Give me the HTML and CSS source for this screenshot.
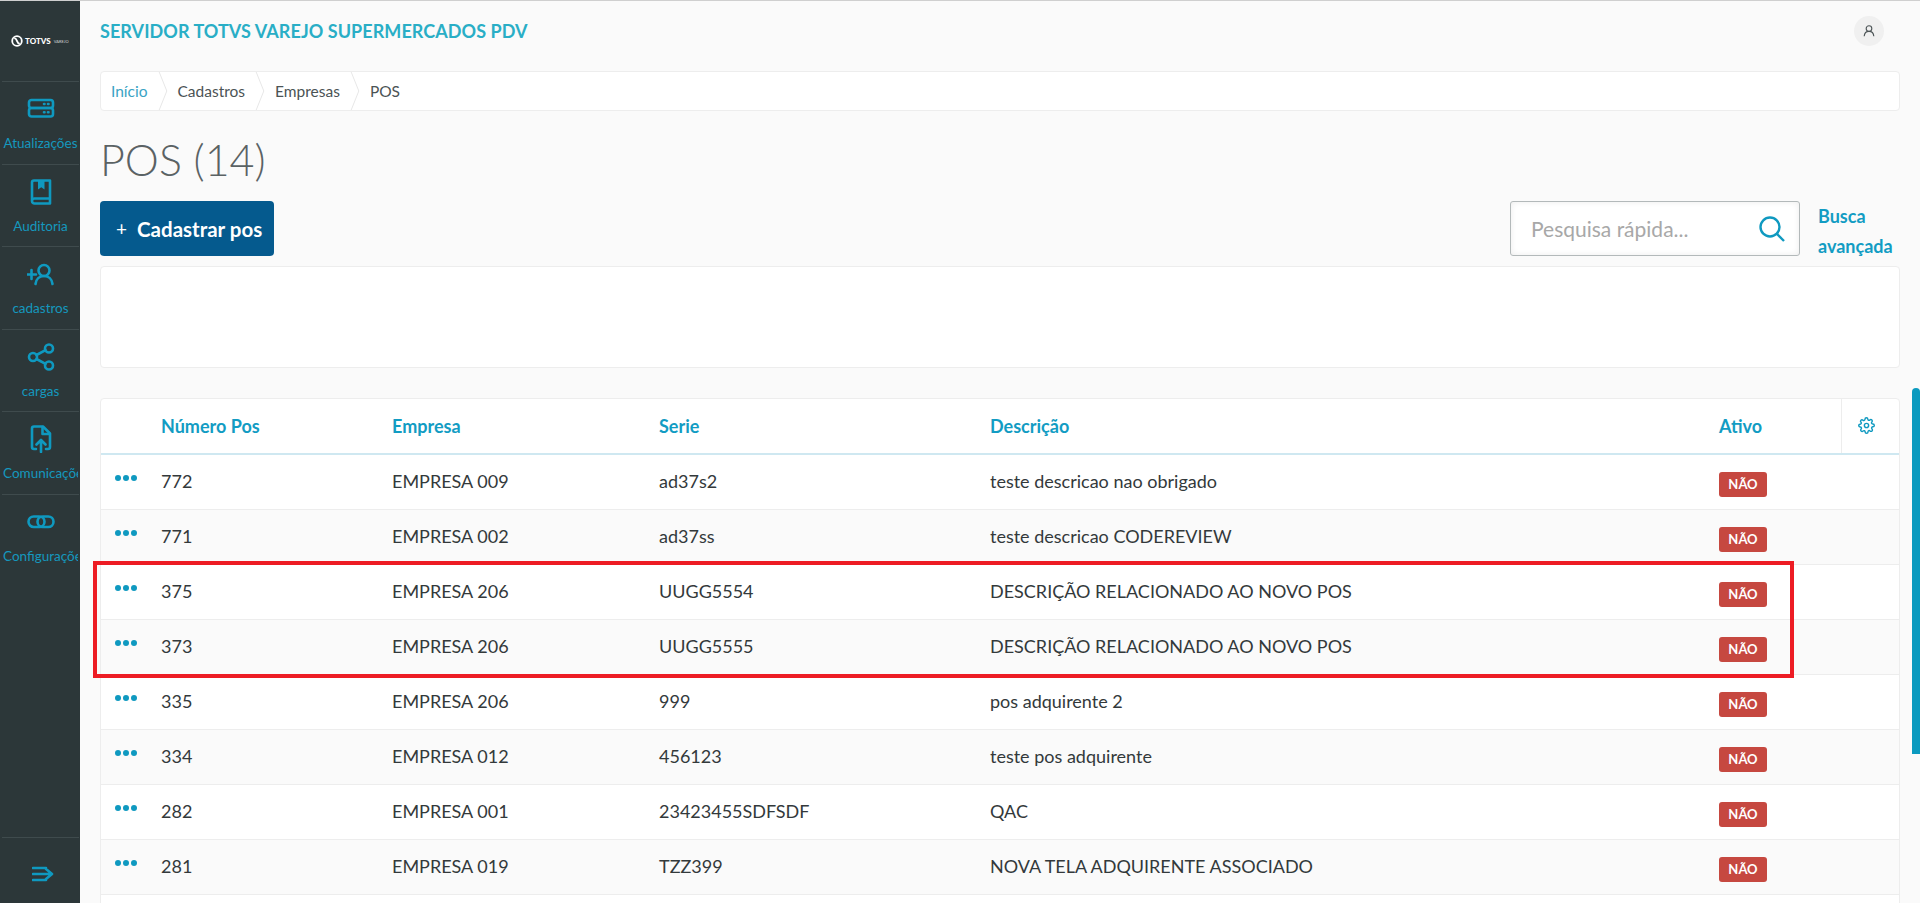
FILE: index.html
```html
<!DOCTYPE html>
<html lang="pt-BR">
<head>
    <meta charset="UTF-8">
    <meta name="viewport" content="width=device-width, initial-scale=1.0">
    <title>POS</title>
    <link rel="stylesheet" href="styles.css">
</head>
<body>
    <aside class="sidebar">
        <div class="logo">
            <svg class="logo-mark" viewBox="0 0 12 12"><circle cx="6" cy="6" r="4.8"/><path d="M3.200 3.200c2 .2 2.300 1.300 2.800 2.800s.8 2.600 2.800 2.800"/></svg>
            <span class="logo-name">TOTVS</span>
            <span class="logo-sub">VAREJO</span>
        </div>
        <nav class="menu">
            <a class="menu-item">
                <svg class="menu-icon" viewBox="0 0 28 28"><rect x="2" y="5" width="24" height="8" rx="2.5"/><rect x="2" y="13" width="24" height="8.5" rx="2.5"/><path d="M17 9h.5M21 9h.5M17 17.3h.5M21 17.3h.5"/></svg>
                <span class="menu-label">Atualizações</span>
            </a>
            <a class="menu-item">
                <svg class="menu-icon" viewBox="0 0 28 28"><path d="M5 23V4.5A2 2 0 0 1 7 2.500H23V25.500H7.500A2.500 2.500 0 0 1 5 23A2.500 2.500 0 0 1 7.500 20.500H23"/><path class="solid" d="M11 3h6.500v8.500l-3.250-2.300L11 11.500z"/></svg>
                <span class="menu-label">Auditoria</span>
            </a>
            <a class="menu-item">
                <svg class="menu-icon" viewBox="0 0 28 28"><path d="M0 14.500h9M4.500 10v9"/><circle cx="17" cy="10.500" r="5.500"/><path d="M8.500 24c.5-5 4-8 8.500-8s8 3 8.500 8"/></svg>
                <span class="menu-label">cadastros</span>
            </a>
            <a class="menu-item">
                <svg class="menu-icon" viewBox="0 0 28 28"><circle cx="6" cy="14" r="4"/><circle cx="22" cy="5.500" r="4"/><circle cx="22" cy="22.500" r="4"/><path d="M9.500 12l9-4.800M9.500 16l9 4.800"/></svg>
                <span class="menu-label">cargas</span>
            </a>
            <a class="menu-item">
                <svg class="menu-icon" viewBox="0 0 28 28"><path d="M9 24H7a2 2 0 0 1-2-2V3.500a2 2 0 0 1 2-2h9l7 7V22a2 2 0 0 1-2 2h-2"/><path d="M15.500 2v7h7" /><path d="M14 27V15M9.500 19.500L14 15l4.500 4.500"/></svg>
                <span class="menu-label">Comunicações</span>
            </a>
            <a class="menu-item">
                <svg class="menu-icon" viewBox="0 0 28 28"><rect x="1.500" y="8.500" width="16" height="10.500" rx="5.250"/><rect x="10.500" y="8.500" width="16" height="10.500" rx="5.250"/></svg>
                <span class="menu-label">Configurações</span>
            </a>
        </nav>
        <div class="sidebar-foot">
            <svg class="foot-icon" viewBox="0 0 22 16"><path d="M1 2h13M1 8h18M1 14h13M14 3l6 5-6 5"/></svg>
        </div>
    </aside>

    <main class="content">
        <header class="topbar">
            <h2 class="app-title">SERVIDOR TOTVS VAREJO SUPERMERCADOS PDV</h2>
            <span class="avatar">
                <svg viewBox="0 0 16 16"><circle cx="8" cy="5.200" r="3.200"/><path d="M2.500 14c.3-3.500 2.500-5.500 5.500-5.500s5.200 2 5.500 5.500"/></svg>
            </span>
        </header>

        <nav class="breadcrumb">
            <a class="crumb crumb-link">Início</a>
            <svg class="crumb-sep" viewBox="0 0 10 40"><path d="M1 0l8 20-8 20"/></svg>
            <a class="crumb">Cadastros</a>
            <svg class="crumb-sep" viewBox="0 0 10 40"><path d="M1 0l8 20-8 20"/></svg>
            <a class="crumb">Empresas</a>
            <svg class="crumb-sep" viewBox="0 0 10 40"><path d="M1 0l8 20-8 20"/></svg>
            <a class="crumb">POS</a>
        </nav>

        <h1 class="page-title">POS (14)</h1>

        <div class="toolbar">
            <button class="btn-new"><span class="btn-plus">+</span>Cadastrar pos</button>
            <div class="search">
                <span class="search-text">Pesquisa rápida...</span>
                <svg class="search-icon" viewBox="0 0 26 26"><circle cx="11" cy="11" r="9.500"/><path d="M18 18l7 7"/></svg>
            </div>
            <a class="search-more">Busca avançada</a>
        </div>

        <div class="filters"></div>

        <div class="table-card">
            <table class="grid">
                <colgroup>
                    <col class="col-acts"><col class="col-num"><col class="col-emp"><col class="col-serie"><col class="col-desc"><col class="col-ativo"><col class="col-cfg">
                </colgroup>
                <thead>
                    <tr>
                        <th></th>
                        <th>Número Pos</th>
                        <th>Empresa</th>
                        <th>Serie</th>
                        <th>Descrição</th>
                        <th>Ativo</th>
                        <th class="cfg">
                            <svg class="gear" viewBox="0 0 24 24"><circle cx="12" cy="12" r="3"/><path d="M19.400 15a1.650 1.650 0 0 0 .33 1.820l.06.06a2 2 0 1 1-2.830 2.830l-.06-.06a1.650 1.650 0 0 0-2.800 1.170V21a2 2 0 0 1-4 0v-.09a1.650 1.650 0 0 0-2.810-1.150l-.06.06a2 2 0 1 1-2.830-2.830l.06-.06a1.650 1.650 0 0 0-1.170-2.800H3a2 2 0 0 1 0-4h.09a1.650 1.650 0 0 0 1.150-2.810l-.06-.06a2 2 0 1 1 2.830-2.830l.06.06a1.650 1.650 0 0 0 2.800-1.170V3a2 2 0 0 1 4 0v.09a1.650 1.650 0 0 0 2.810 1.150l.06-.06a2 2 0 1 1 2.830 2.830l-.06.06a1.650 1.650 0 0 0 1.170 2.800H21a2 2 0 0 1 0 4h-.09a1.650 1.650 0 0 0-1.510 1z"/></svg>
                        </th>
                    </tr>
                </thead>
                <tbody>
                    <tr>
                        <td><span class="dots"><i></i><i></i><i></i></span></td>
                        <td>772</td><td>EMPRESA 009</td><td>ad37s2</td><td>teste descricao nao obrigado</td>
                        <td><span class="badge">NÃO</span></td><td></td>
                    </tr>
                    <tr>
                        <td><span class="dots"><i></i><i></i><i></i></span></td>
                        <td>771</td><td>EMPRESA 002</td><td>ad37ss</td><td>teste descricao CODEREVIEW</td>
                        <td><span class="badge">NÃO</span></td><td></td>
                    </tr>
                    <tr>
                        <td><span class="dots"><i></i><i></i><i></i></span></td>
                        <td>375</td><td>EMPRESA 206</td><td>UUGG5554</td><td>DESCRIÇÃO RELACIONADO AO NOVO POS</td>
                        <td><span class="badge">NÃO</span></td><td></td>
                    </tr>
                    <tr>
                        <td><span class="dots"><i></i><i></i><i></i></span></td>
                        <td>373</td><td>EMPRESA 206</td><td>UUGG5555</td><td>DESCRIÇÃO RELACIONADO AO NOVO POS</td>
                        <td><span class="badge">NÃO</span></td><td></td>
                    </tr>
                    <tr>
                        <td><span class="dots"><i></i><i></i><i></i></span></td>
                        <td>335</td><td>EMPRESA 206</td><td>999</td><td>pos adquirente 2</td>
                        <td><span class="badge">NÃO</span></td><td></td>
                    </tr>
                    <tr>
                        <td><span class="dots"><i></i><i></i><i></i></span></td>
                        <td>334</td><td>EMPRESA 012</td><td>456123</td><td>teste pos adquirente</td>
                        <td><span class="badge">NÃO</span></td><td></td>
                    </tr>
                    <tr>
                        <td><span class="dots"><i></i><i></i><i></i></span></td>
                        <td>282</td><td>EMPRESA 001</td><td>23423455SDFSDF</td><td>QAC</td>
                        <td><span class="badge">NÃO</span></td><td></td>
                    </tr>
                    <tr>
                        <td><span class="dots"><i></i><i></i><i></i></span></td>
                        <td>281</td><td>EMPRESA 019</td><td>TZZ399</td><td>NOVA TELA ADQUIRENTE ASSOCIADO</td>
                        <td><span class="badge">NÃO</span></td><td></td>
                    </tr>
                    <tr>
                        <td></td><td></td><td></td><td></td><td></td><td></td><td></td>
                    </tr>
                </tbody>
            </table>
        </div>
    </main>

    <div class="scroll-thumb"></div>
    <div class="highlight"></div>
</body>
</html>
```

FILE: styles.css
```css
* {
    margin: 0;
    padding: 0;
    box-sizing: border-box;
}

html, body {
    height: 903px;
    overflow: hidden;
}

body {
    display: flex;
    border-top: 1px solid #cfcfcf;
    background: #fafafa;
    font-family: Lato, "Open Sans", sans-serif;
    font-size: 18px;
    color: #33393b;
}

/* Sidebar */

.sidebar {
    width: 80px;
    flex-shrink: 0;
    display: flex;
    flex-direction: column;
    background: #2c3739;
}

.logo {
    height: 80px;
    display: flex;
    align-items: center;
    padding: 0 0 0 11px;
    color: #fff;
}

.logo-mark {
    width: 12px;
    height: 12px;
    fill: none;
    stroke: #fff;
    stroke-width: 1.800;
}

.logo-name {
    margin-left: 2px;
    font-size: 8px;
    font-weight: 900;
}

.logo-sub {
    margin-left: 3px;
    font-size: 4px;
    color: #cfd4d5;
}

.menu {
    flex: 1;
}

.menu-item {
    height: 82.600px;
    margin: 0 1px 0 2px;
    display: flex;
    flex-direction: column;
    align-items: center;
    padding: 13px 1px 0;
    border-top: 1px solid #3f4b4d;
    color: #1597be;
}

.menu-icon {
    width: 28px;
    height: 28px;
    flex-shrink: 0;
    fill: none;
    stroke: #0f99c0;
    stroke-width: 2.600;
    stroke-linecap: round;
    stroke-linejoin: round;
}

.menu-icon .solid {
    fill: #0f99c0;
    stroke: none;
}

.menu-label {
    width: 100%;
    margin-top: 10px;
    font-size: 13.500px;
    line-height: 20px;
    text-align: center;
    white-space: nowrap;
    overflow: hidden;
}

.sidebar-foot {
    height: 66px;
    margin: 0 1px 0 2px;
    padding: 7px 0 0 4px;
    display: flex;
    justify-content: center;
    align-items: center;
    border-top: 1px solid #3f4b4d;
}

.foot-icon {
    width: 22px;
    height: 16px;
    fill: none;
    stroke: #0f99c0;
    stroke-width: 2.600;
    stroke-linecap: round;
    stroke-linejoin: round;
}

/* Content */

.content {
    flex: 1;
    min-width: 0;
    padding: 0 20px 0 20px;
}

.topbar {
    height: 70px;
    display: flex;
    justify-content: space-between;
    align-items: center;
    padding: 0 16px 10px 0;
}

.app-title {
    font-size: 18px;
    font-weight: 700;
    letter-spacing: 0.06px;
    color: #29aec6;
}

.avatar {
    width: 30px;
    height: 30px;
    display: flex;
    justify-content: center;
    align-items: center;
    border-radius: 50%;
    background: #f0f0f0;
}

.avatar svg {
    width: 14px;
    height: 14px;
    fill: none;
    stroke: #4d5557;
    stroke-width: 1.300;
}

.breadcrumb {
    height: 40px;
    display: flex;
    align-items: center;
    padding-left: 10px;
    background: #fff;
    border: 1px solid #ededed;
    border-radius: 4px;
    font-size: 15.500px;
}

.crumb {
    color: #4b5355;
}

.crumb-link {
    color: #3aa3c4;
}

.crumb-sep {
    width: 10px;
    height: 38px;
    margin: 0 10px;
    fill: none;
    stroke: #e6e6e6;
}

.page-title {
    height: 90px;
    padding-top: 24px;
    font-size: 43px;
    line-height: 50px;
    font-weight: 300;
    color: #5a6264;
}

.toolbar {
    height: 55px;
    display: flex;
    align-items: center;
}

.btn-new {
    height: 55px;
    width: 174px;
    padding-left: 16px;
    display: flex;
    align-items: center;
    border: none;
    border-radius: 4px;
    background: #055a8e;
    color: #fff;
    font-family: inherit;
    font-size: 20.500px;
    font-weight: 700;
}

.btn-plus {
    margin-right: 10px;
    font-weight: 400;
    font-size: 19px;
}

.search {
    width: 290px;
    height: 55px;
    margin-left: auto;
    display: flex;
    justify-content: space-between;
    align-items: center;
    padding: 0 14px 0 20px;
    background: #fff;
    border: 1px solid #b3b9ba;
    border-radius: 3px;
    box-shadow: inset 0 0 6px rgba(0, 0, 0, 0.08);
}

.search-text {
    font-size: 21px;
    color: #a8a8a8;
}

.search-icon {
    width: 26px;
    height: 26px;
    fill: none;
    stroke: #0f99c0;
    stroke-width: 2.400;
}

.search-more {
    width: 82px;
    margin-left: 18px;
    padding-top: 4px;
    font-size: 18px;
    font-weight: 700;
    line-height: 30px;
    color: #129cc3;
}

.filters {
    height: 102px;
    margin-top: 10px;
    background: #fff;
    border: 1px solid #ededed;
    border-radius: 4px;
}

.table-card {
    margin-top: 30px;
    background: #fff;
    border: 1px solid #ededed;
    border-radius: 4px 4px 0 0;
}

.grid {
    width: 100%;
    table-layout: fixed;
    border-collapse: collapse;
}

.col-acts { width: 60px; }
.col-num { width: 231px; }
.col-emp { width: 267px; }
.col-serie { width: 331px; }
.col-desc { width: 729px; }
.col-ativo { width: 122px; }
.col-cfg { width: 58px; }

.grid th {
    height: 55px;
    text-align: left;
    font-size: 18px;
    font-weight: 700;
    color: #129cc3;
    border-bottom: 2px solid #cfe8f1;
}

.grid th.cfg {
    border-left: 1px solid #ededed;
}

.gear {
    display: block;
    width: 17px;
    height: 17px;
    margin: 0 0 2px 16px;
    fill: none;
    stroke: #0f99c0;
    stroke-width: 2;
}

.grid td {
    height: 55px;
    padding-bottom: 1px;
    border-bottom: 1px solid #ededed;
    color: #33393b;
}

.grid tbody tr:nth-child(even) td {
    background: #fafafa;
}

.dots {
    display: flex;
    justify-content: flex-end;
    gap: 2px;
    width: 36px;
    margin-bottom: 6px;
}

.dots i {
    width: 6px;
    height: 6px;
    border-radius: 50%;
    background: #0f99c0;
}

.badge {
    display: block;
    width: 48px;
    height: 25px;
    margin-top: 6px;
    border-radius: 3px;
    background: #c64840;
    color: #fff;
    font-size: 13px;
    font-weight: 700;
    line-height: 24px;
    text-align: center;
}

/* Page scrollbar and the red mark laid over the screenshot */

.scroll-thumb {
    position: absolute;
    top: 388px;
    right: 0;
    width: 8px;
    height: 366px;
    border-radius: 4px 4px 0 0;
    background: #0b9abf;
}

.highlight {
    position: absolute;
    left: 93px;
    top: 561px;
    width: 1701px;
    height: 117px;
    border: 4px solid #ed1c24;
}
```
